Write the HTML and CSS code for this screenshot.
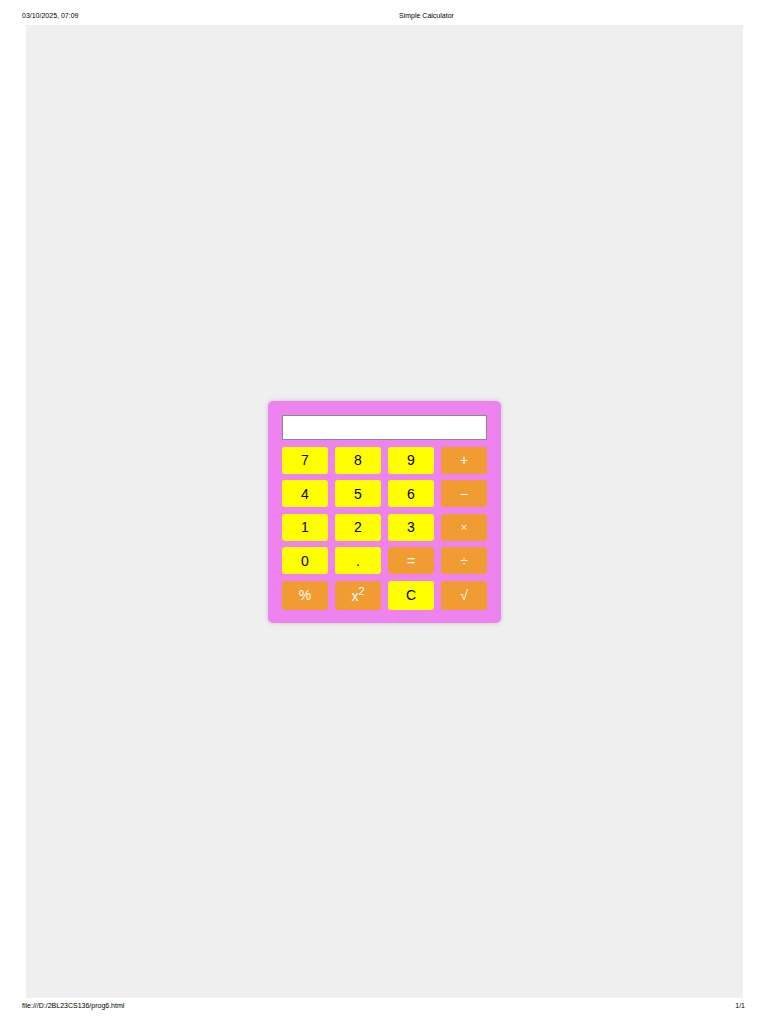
FILE: index.html
```html
<!DOCTYPE html>
<html lang="en">
<head>
<meta charset="utf-8">
<title>Simple Calculator</title>
<link rel="stylesheet" href="styles.css">
</head>
<body>
<div class="page">
  <header class="print-head">
    <span class="print-date">03/10/2025, 07:09</span>
    <span class="print-title">Simple Calculator</span>
  </header>
  <main class="sheet">
    <div class="calc">
      <input class="display" type="text" readonly>
      <div class="keys">
        <button class="key num">7</button>
        <button class="key num">8</button>
        <button class="key num">9</button>
        <button class="key op">+</button>
        <button class="key num">4</button>
        <button class="key num">5</button>
        <button class="key num">6</button>
        <button class="key op">&minus;</button>
        <button class="key num">1</button>
        <button class="key num">2</button>
        <button class="key num">3</button>
        <button class="key op small">&times;</button>
        <button class="key num">0</button>
        <button class="key num">.</button>
        <button class="key op">=</button>
        <button class="key op">&divide;</button>
        <button class="key op">%</button>
        <button class="key op">x<sup>2</sup></button>
        <button class="key num">C</button>
        <button class="key op">&radic;</button>
      </div>
    </div>
  </main>
  <footer class="print-foot">
    <span>file:///D:/2BL23CS136/prog6.html</span>
    <span>1/1</span>
  </footer>
</div>
</body>
</html>
```

FILE: styles.css
```css
html, body {
  margin: 0;
  padding: 0;
  background: #ffffff;
}

.page {
  width: 768px;
  height: 1024px;
  display: flex;
  flex-direction: column;
  font-family: "Liberation Sans", Arial, sans-serif;
}

.print-head {
  height: 25px;
  box-sizing: border-box;
  padding: 12px 0 0 22px;
  display: flex;
  font-size: 7px;
  line-height: 8px;
  color: #000;
}

.print-date {
  width: 377px;
}

.print-title {
  white-space: nowrap;
}

.sheet {
  height: 973px;
  margin: 0 25px 0 26px;
  background: #efefef;
  display: flex;
  align-items: center;
  justify-content: center;
}

.calc {
  width: 205px;
  padding: 14px 14px 13px;
  background: #ee82ee;
  border-radius: 5px;
  box-shadow: 0 0 4px rgba(0, 0, 0, 0.18);
  display: flex;
  flex-direction: column;
  gap: 7px;
}

.display {
  display: block;
  width: 205px;
  height: 25px;
  box-sizing: border-box;
  margin: 0;
  border: 1px solid #8a8a8a;
  background: #ffffff;
  padding: 0 4px;
  font-family: "Liberation Sans", Arial, sans-serif;
  font-size: 14px;
}

.keys {
  display: grid;
  grid-template-columns: repeat(4, 46px);
  column-gap: 7px;
  row-gap: 6.5px;
}

.key {
  margin: 0;
  border: none;
  border-radius: 3px;
  padding: 5.5px 0;
  font-family: "Liberation Sans", Arial, sans-serif;
  font-size: 14px;
  line-height: 16px;
  text-align: center;
  color: inherit;
}

.key sup {
  font-size: 11px;
  line-height: 11px;
  vertical-align: 6px;
}

.num {
  background: #ffff00;
  color: #000000;
}

.op {
  background: #f09c33;
  color: #ffffff;
}

.small {
  font-size: 11px;
}

.print-foot {
  height: 26px;
  box-sizing: border-box;
  padding: 4px 23px 0 22px;
  display: flex;
  justify-content: space-between;
  font-size: 7px;
  line-height: 8px;
  color: #000;
}
```
